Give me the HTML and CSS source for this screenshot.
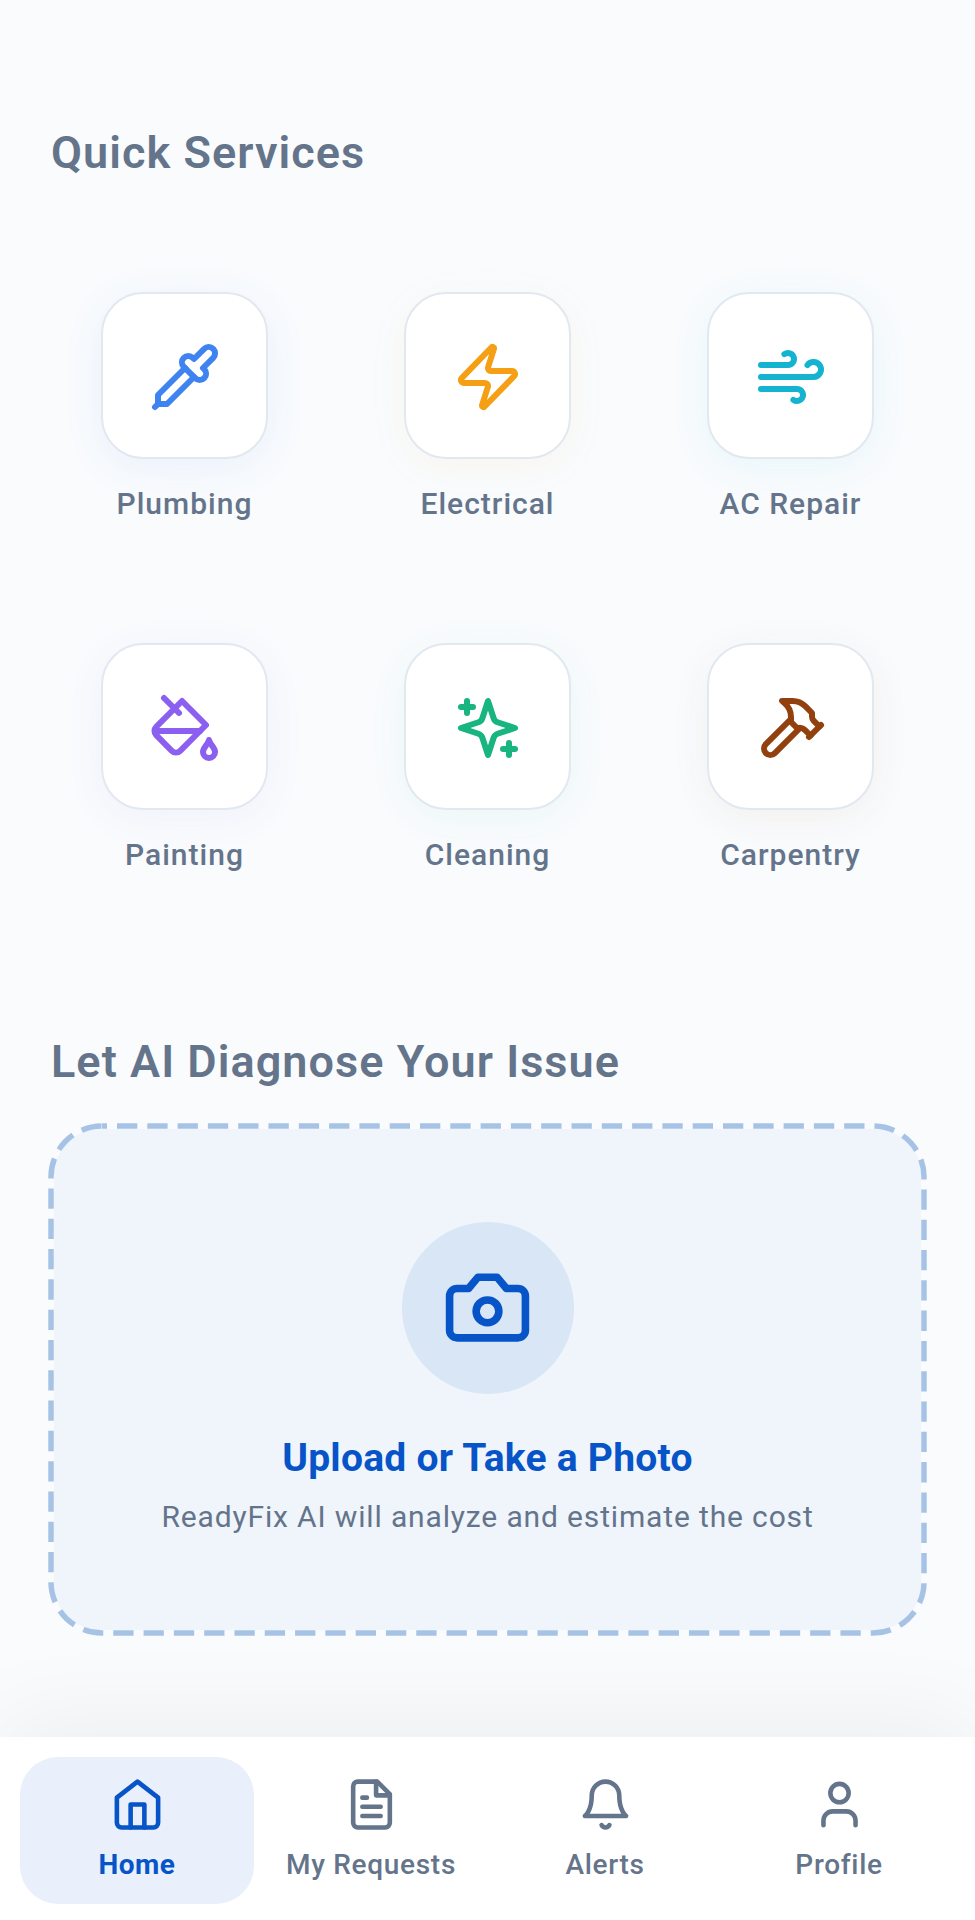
FILE: index.html
```html
<!DOCTYPE html>
<html lang="en">
<head>
    <meta charset="UTF-8">
    <meta name="viewport" content="width=device-width, initial-scale=1.0">
    <title>ReadyFix Home</title>
    <link rel="stylesheet" href="styles.css">
</head>
<body>
    <main class="content">
        <h2 class="section-title services-title">Quick Services</h2>

        <div class="services">
            <div class="service">
                <div class="tile tile-blue">
                    <svg class="icon" viewBox="0 0 24 24"><path d="m2 22 1-1h3l9-9"/><path d="M3 21v-3l9-9"/><path d="m15 6 3.4-3.4a2.1 2.1 0 1 1 3 3L18 9l.4.4a2.1 2.1 0 1 1-3 3l-3.8-3.8a2.1 2.1 0 1 1 3-3l.4.4Z"/></svg>
                </div>
                <span class="service-name">Plumbing</span>
            </div>
            <div class="service">
                <div class="tile tile-amber">
                    <svg class="icon" viewBox="0 0 24 24"><path d="M4 14a1 1 0 0 1-.78-1.63l9.9-10.2a.5.5 0 0 1 .86.46l-1.92 6.02A1 1 0 0 0 13 10h7a1 1 0 0 1 .78 1.63l-9.9 10.2a.5.5 0 0 1-.86-.46l1.92-6.02A1 1 0 0 0 11 14z"/></svg>
                </div>
                <span class="service-name">Electrical</span>
            </div>
            <div class="service">
                <div class="tile tile-cyan">
                    <svg class="icon" viewBox="0 0 24 24"><path d="M12.8 19.6A2 2 0 1 0 14 16H2"/><path d="M17.5 8a2.5 2.5 0 1 1 2 4H2"/><path d="M9.8 4.4A2 2 0 1 1 11 8H2"/></svg>
                </div>
                <span class="service-name">AC Repair</span>
            </div>
            <div class="service">
                <div class="tile tile-violet">
                    <svg class="icon" viewBox="0 0 24 24"><path d="m19 11-8-8-8.6 8.6a2 2 0 0 0 0 2.8l5.2 5.2c.8.8 2 .8 2.8 0L19 11Z"/><path d="m5 2 5 5"/><path d="M2 13h15"/><path d="M22 20a2 2 0 1 1-4 0c0-1.6 1.7-2.4 2-4 .3 1.6 2 2.4 2 4Z"/></svg>
                </div>
                <span class="service-name">Painting</span>
            </div>
            <div class="service">
                <div class="tile tile-green">
                    <svg class="icon" viewBox="0 0 24 24"><path d="m12 3-1.912 5.813a2 2 0 0 1-1.275 1.275L3 12l5.813 1.912a2 2 0 0 1 1.275 1.275L12 21l1.912-5.813a2 2 0 0 1 1.275-1.275L21 12l-5.813-1.912a2 2 0 0 1-1.275-1.275L12 3Z"/><path d="M5 3v4"/><path d="M19 17v4"/><path d="M3 5h4"/><path d="M17 19h4"/></svg>
                </div>
                <span class="service-name">Cleaning</span>
            </div>
            <div class="service">
                <div class="tile tile-brown">
                    <svg class="icon" viewBox="0 0 24 24"><path d="m15 12-8.373 8.373a1 1 0 1 1-3-3L12 9"/><path d="m18 15 4-4"/><path d="m21.5 11.5-1.914-1.914A2 2 0 0 1 19 8.172V7l-2.26-2.26a6 6 0 0 0-4.202-1.756L9 2.96l.92.82A6.18 6.18 0 0 1 12 8.4V10l2 2h1.172a2 2 0 0 1 1.414.586L18.5 14.5"/></svg>
                </div>
                <span class="service-name">Carpentry</span>
            </div>
        </div>

        <h2 class="section-title diagnose-title">Let AI Diagnose Your Issue</h2>

        <div class="upload">
            <svg class="upload-border" viewBox="0 0 879 513"><rect x="3" y="3" width="873" height="507" rx="51" ry="51"/></svg>
            <div class="upload-circle">
                <svg class="upload-icon" viewBox="0 0 24 24"><path d="M14.5 4h-5L7 7H4a2 2 0 0 0-2 2v9a2 2 0 0 0 2 2h16a2 2 0 0 0 2-2V9a2 2 0 0 0-2-2h-3l-2.5-3z"/><circle cx="12" cy="13" r="3"/></svg>
            </div>
            <div class="upload-title">Upload or Take a Photo</div>
            <div class="upload-text">ReadyFix AI will analyze and estimate the cost</div>
        </div>
    </main>

    <nav class="bottom-nav">
        <a class="nav-item active">
            <svg class="nav-icon" viewBox="0 0 24 24"><path d="m3 9 9-7 9 7v11a2 2 0 0 1-2 2H5a2 2 0 0 1-2-2z"/><path d="M9 22V12h6v10"/></svg>
            <span>Home</span>
        </a>
        <a class="nav-item">
            <svg class="nav-icon" viewBox="0 0 24 24"><path d="M14.5 2H6a2 2 0 0 0-2 2v16a2 2 0 0 0 2 2h12a2 2 0 0 0 2-2V7.5L14.5 2z"/><path d="M14 2v6h6"/><path d="M16 13H8"/><path d="M16 17H8"/><path d="M10 9H8"/></svg>
            <span>My Requests</span>
        </a>
        <a class="nav-item">
            <svg class="nav-icon" viewBox="0 0 24 24"><path d="M6 8a6 6 0 0 1 12 0c0 7 3 9 3 9H3s3-2 3-9"/><path d="M10.3 21a1.94 1.94 0 0 0 3.4 0"/></svg>
            <span>Alerts</span>
        </a>
        <a class="nav-item">
            <svg class="nav-icon" viewBox="0 0 24 24"><path d="M19 21v-2a4 4 0 0 0-4-4H9a4 4 0 0 0-4 4v2"/><circle cx="12" cy="7" r="4"/></svg>
            <span>Profile</span>
        </a>
    </nav>
</body>
</html>
```

FILE: styles.css
```css
/* Base styles */
html, body {
    height: 100%;
}

body {
    margin: 0;
    display: flex;
    flex-direction: column;
    height: 1920px;
    overflow: hidden;
    background: #f9fbfd;
    color: #64748b;
    font-family: 'Roboto', 'Liberation Sans', sans-serif;
}

.content {
    flex: 1;
    padding: 0 48px;
}

/* Section headings */
.section-title {
    margin: 0;
    font-size: 45px;
    line-height: 52px;
    font-weight: 600;
    letter-spacing: 1.05px;
    color: #64748b;
}

.services-title {
    padding: 127px 0 0 3px;
}

.diagnose-title {
    padding: 0 0 0 3px;
    margin-top: 164px;
}

/* Service grid */
.services {
    display: grid;
    grid-template-columns: repeat(3, 303px);
    margin: 113px -15px 0;
    row-gap: 122.5px;
}

.service {
    display: flex;
    flex-direction: column;
    align-items: center;
    gap: 26.5px;
}

.tile {
    display: flex;
    align-items: center;
    justify-content: center;
    box-sizing: border-box;
    width: 167px;
    height: 167px;
    padding-top: 2px;
    background: #fff;
    border: 2px solid #e2e8f0;
    border-radius: 42px;
}

.icon {
    width: 72px;
    height: 72px;
    fill: none;
    stroke: currentColor;
    stroke-width: 2;
    stroke-linecap: round;
    stroke-linejoin: round;
}

.tile-blue { color: #3f83f0; box-shadow: 0 8px 40px rgba(59, 130, 246, 0.08); }
.tile-amber { color: #f59f14; box-shadow: 0 8px 40px rgba(245, 158, 11, 0.06); }
.tile-cyan { color: #14b3d0; box-shadow: 0 8px 40px rgba(6, 182, 212, 0.07); }
.tile-violet { color: #8b5ff0; box-shadow: 0 8px 40px rgba(139, 92, 246, 0.06); }
.tile-green { color: #18b580; box-shadow: 0 8px 40px rgba(16, 185, 129, 0.06); }
.tile-brown { color: #92400e; box-shadow: 0 8px 40px rgba(146, 64, 14, 0.06); }

.service-name {
    font-size: 30px;
    line-height: 35px;
    font-weight: 500;
    letter-spacing: 1px;
    color: #64748b;
}

/* Upload card */
.upload {
    position: relative;
    display: flex;
    flex-direction: column;
    align-items: center;
    box-sizing: border-box;
    height: 513px;
    margin-top: 35px;
    padding-top: 99px;
}

.upload::before {
    content: "";
    position: absolute;
    inset: 6px;
    background: #f0f5fc;
    border-radius: 46px;
}

.upload-border {
    position: absolute;
    inset: 0;
    width: 100%;
    height: 100%;
    fill: none;
    stroke: #a6c3e6;
    stroke-width: 5.5;
    stroke-dasharray: 20.3 10;
    stroke-dashoffset: -15;
}

.upload-circle {
    position: relative;
    display: flex;
    align-items: center;
    justify-content: center;
    width: 172px;
    height: 172px;
    border-radius: 50%;
    background: #d9e6f6;
}

.upload-icon {
    width: 91px;
    height: 91px;
    fill: none;
    stroke: #0654c8;
    stroke-width: 2;
    stroke-linecap: round;
    stroke-linejoin: round;
}

.upload-title {
    position: relative;
    margin-top: 41px;
    font-size: 39px;
    line-height: 46px;
    font-weight: 700;
    letter-spacing: 0.25px;
    color: #0654c8;
}

.upload-text {
    position: relative;
    margin-top: 18px;
    font-size: 30px;
    line-height: 36px;
    letter-spacing: 0.85px;
    color: #64748b;
}

/* Bottom navigation */
.bottom-nav {
    display: grid;
    grid-template-columns: repeat(4, 234px);
    box-sizing: border-box;
    height: 183px;
    padding: 20px 20px 16px;
    background: #fff;
    box-shadow: 0 -20px 90px rgba(0, 0, 0, 0.05);
}

.nav-item {
    display: flex;
    flex-direction: column;
    align-items: center;
    padding-top: 20px;
    border-radius: 38px;
    font-size: 28px;
    line-height: 32px;
    font-weight: 500;
    letter-spacing: 0.7px;
    color: #64748b;
}

.nav-item span {
    margin-top: 17px;
}

.nav-icon {
    width: 55px;
    height: 55px;
    fill: none;
    stroke: currentColor;
    stroke-width: 2;
    stroke-linecap: round;
    stroke-linejoin: round;
}

.nav-item.active {
    background: #e9f0fb;
    color: #0654c8;
    font-weight: 700;
    letter-spacing: 0.5px;
}
```
